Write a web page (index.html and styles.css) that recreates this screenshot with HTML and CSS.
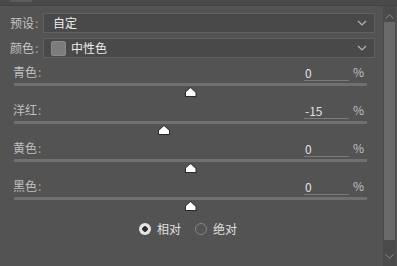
FILE: index.html
```html
<!DOCTYPE html>
<html>
<head>
    <title>可选颜色</title>
    <link rel="stylesheet" href="styles.css">
</head>
<body>
    <div class="topbar"><div class="tab"></div></div>
    <div class="main">
        <div class="content">
            <div class="field">
                <span class="label">预设<i>:</i></span>
                <div class="select">
                    <span class="select-text">自定</span>
                    <svg class="chev" width="10" height="6" viewBox="0 0 10 6"><path d="M1 1 L5 5 L9 1" fill="none" stroke="#b4b4b4" stroke-width="1.2"/></svg>
                </div>
            </div>
            <div class="field">
                <span class="label">颜色<i>:</i></span>
                <div class="select">
                    <span class="swatch"></span>
                    <span class="select-text">中性色</span>
                    <svg class="chev" width="10" height="6" viewBox="0 0 10 6"><path d="M1 1 L5 5 L9 1" fill="none" stroke="#b4b4b4" stroke-width="1.2"/></svg>
                </div>
            </div>

            <div class="sliders">
                <div class="slider">
                    <div class="slider-head">
                        <span class="slider-label">青色<i>:</i></span>
                        <span class="value">0</span>
                        <span class="pct">%</span>
                    </div>
                    <div class="track"><span class="thumb" style="left: 50%"></span></div>
                </div>
                <div class="slider">
                    <div class="slider-head">
                        <span class="slider-label">洋红<i>:</i></span>
                        <span class="value">-15</span>
                        <span class="pct">%</span>
                    </div>
                    <div class="track"><span class="thumb" style="left: 42.5%"></span></div>
                </div>
                <div class="slider">
                    <div class="slider-head">
                        <span class="slider-label">黄色<i>:</i></span>
                        <span class="value">0</span>
                        <span class="pct">%</span>
                    </div>
                    <div class="track"><span class="thumb" style="left: 50%"></span></div>
                </div>
                <div class="slider">
                    <div class="slider-head">
                        <span class="slider-label">黑色<i>:</i></span>
                        <span class="value">0</span>
                        <span class="pct">%</span>
                    </div>
                    <div class="track"><span class="thumb" style="left: 50%"></span></div>
                </div>
            </div>

            <div class="modes">
                <span class="radio checked"></span><span class="mode-text">相对</span>
                <span class="radio"></span><span class="mode-text">绝对</span>
            </div>
        </div>
        <div class="scrollbar">
            <svg class="arrow" width="9" height="5" viewBox="0 0 9 5"><path d="M0.5 4.5 L4.5 0.8 L8.5 4.5" fill="none" stroke="#8a8a8a" stroke-width="1"/></svg>
            <div class="scroll-thumb"></div>
            <svg class="arrow" width="9" height="5" viewBox="0 0 9 5"><path d="M0.5 0.5 L4.5 4.2 L8.5 0.5" fill="none" stroke="#8a8a8a" stroke-width="1"/></svg>
        </div>
    </div>
</body>
</html>
```

FILE: styles.css
```css
html, body {
    margin: 0;
    padding: 0;
}

body {
    width: 397px;
    height: 266px;
    overflow: hidden;
    background-color: #535353;
    font-family: "Noto Sans CJK SC", "Noto Sans", sans-serif;
    font-size: 12px;
    line-height: 16px;
    color: #c6c6c6;
}

.topbar {
    height: 5px;
    background-color: #4a4a4a;
    border-bottom: 1px solid #434343;
}

.tab {
    width: 22px;
    height: 2px;
    margin-left: 10px;
    background-color: #5c5c5c;
}

.main {
    display: flex;
    height: 260px;
}

.content {
    flex: 1;
    padding-top: 7px;
}

.field {
    display: flex;
    align-items: center;
    height: 20px;
    margin-bottom: 5px;
}

.label {
    padding-left: 10px;
    box-sizing: border-box;
    width: 43px;
    color: #c4c4c4;
}

.label i, .slider-label i {
    font-style: normal;
    color: #b0a080;
    margin-left: 1px;
}

.select {
    display: flex;
    align-items: center;
    width: 332px;
    height: 20px;
    box-sizing: border-box;
    border: 1px solid #616161;
    background-color: #494949;
    padding-left: 9px;
    padding-right: 6px;
    color: #ececec;
}

.select-text {
    flex: 1;
}

.swatch {
    width: 15px;
    height: 15px;
    margin-left: -2px;
    margin-right: 5px;
    border: 1px solid #8a8a8a;
    border-radius: 2px;
    background-color: #7c7c7c;
    box-sizing: border-box;
}

.chev {
    margin-right: 1px;
}

.sliders {
    padding-top: 1px;
}

.slider {
    height: 38px;
    padding-left: 14px;
    width: 353px;
}

.slider-head {
    display: flex;
    align-items: center;
    height: 16px;
}

.slider-label {
    flex: 1;
    color: #c0c0c0;
    margin-left: -1px;
}

.value {
    width: 44px;
    color: #e0e0e8;
    padding-left: 1px;
    border-bottom: 1px solid #7a7a7a;
    line-height: 15px;
    margin-top: 1px;
    margin-right: 4px;
}

.pct {
    width: 10px;
    color: #c0c0c8;
    margin-right: 4px;
}

.track {
    position: relative;
    height: 3px;
    margin-top: 3px;
    background-color: #707070;
}

.thumb {
    position: absolute;
    top: 4px;
    width: 12px;
    height: 10px;
    margin-left: -6px;
    background-color: #2a2a2a;
    clip-path: polygon(50% 0, 100% 55%, 100% 100%, 0 100%, 0 55%);
}

.thumb::after {
    content: "";
    position: absolute;
    left: 1px;
    right: 1px;
    top: 1px;
    bottom: 1px;
    background-color: #ffffff;
    clip-path: polygon(50% 0, 100% 55%, 100% 100%, 0 100%, 0 55%);
}

.modes {
    display: flex;
    align-items: center;
    margin-top: 5px;
    padding-left: 139px;
}

.radio {
    width: 12px;
    height: 12px;
    box-sizing: border-box;
    border-radius: 50%;
    border: 1px solid #858585;
    margin-right: 6px;
}

.radio.checked {
    border: none;
    background: radial-gradient(circle, #2e2e2e 0 2.5px, #e4e4e4 3px);
}

.mode-text {
    color: #e0e0e0;
    margin-right: 14px;
}

.scrollbar {
    width: 13px;
    display: flex;
    flex-direction: column;
    align-items: center;
    background-color: #4b4b4b;
    padding-top: 8px;
    margin-right: 1px;
}

.scroll-thumb {
    width: 11px;
    height: 218px;
    margin-top: 3px;
    margin-bottom: 14px;
    background-color: #6a6a6a;
}
```
